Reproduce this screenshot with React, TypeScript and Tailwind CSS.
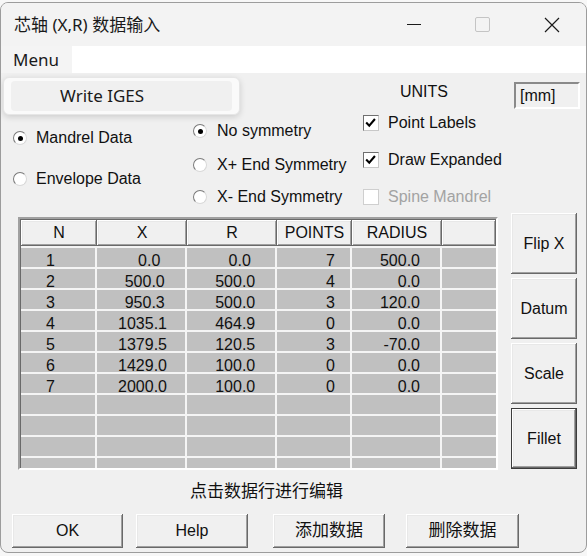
import React from 'react';

const raised =
  'bg-[#f0f0f0] shadow-[inset_-1px_-1px_0_#696969,inset_1px_1px_0_#ffffff,inset_-2px_-2px_0_#a0a0a0,inset_2px_2px_0_#e8e8e8]';

const dlgFont = "font-['Liberation_Sans','Noto_Sans_CJK_SC',sans-serif]";
const uiFont = "font-['Noto_Sans','Noto_Sans_CJK_SC',sans-serif]";

const rows = [
  ['1', '0.0', '0.0', '7', '500.0'],
  ['2', '500.0', '500.0', '4', '0.0'],
  ['3', '950.3', '500.0', '3', '120.0'],
  ['4', '1035.1', '464.9', '0', '0.0'],
  ['5', '1379.5', '120.5', '3', '-70.0'],
  ['6', '1429.0', '100.0', '0', '0.0'],
  ['7', '2000.0', '100.0', '0', '0.0'],
];

const gridCols = 'grid grid-cols-[76px_90px_90px_75px_90px_1fr]';

const Radio = ({ checked = false }: { checked?: boolean }) => (
  <span className="w-[14px] h-[14px] rounded-full bg-white border border-t-[#7a7a7a] border-l-[#7a7a7a] border-b-[#d8d8d8] border-r-[#d8d8d8] flex items-center justify-center shrink-0">
    {checked && <span className="w-[5px] h-[5px] rounded-full bg-black" />}
  </span>
);

const Check = ({ checked = false, disabled = false }: { checked?: boolean; disabled?: boolean }) => (
  <span
    className={`w-[16px] h-[16px] bg-white border flex items-center justify-center shrink-0 ${
      disabled ? 'border-[#cfcfcf]' : 'border-t-[#6f6f6f] border-l-[#6f6f6f] border-b-[#c8c8c8] border-r-[#c8c8c8]'
    }`}
  >
    {checked && (
      <svg viewBox="0 0 16 16" className="w-[14px] h-[14px]" fill="none" stroke="#000" strokeWidth="2.4">
        <path d="M2.5 7.5 L6 11 L12.5 3.5" />
      </svg>
    )}
  </span>
);

const App = () => {
  return (
    <div className={`w-[587px] h-[556px] bg-[#f7f7f7] pt-[2px] ${dlgFont}`}>
      <div className="w-[587px] h-[551px] rounded-[8px] border border-[#9c9c9c] overflow-hidden flex flex-col bg-[#f0f0f0]">
        {/* title bar */}
        <div className="h-[43px] bg-[#f3f3f3] flex items-center shrink-0">
          <span className={`flex-1 pl-[13px] text-[17px] text-[#1a1a1a] ${uiFont}`}>芯轴 (X,R) 数据输入</span>
          <div className="w-[69px] h-full flex items-center justify-center">
            <span className="w-[14px] h-px bg-[#1a1a1a]" />
          </div>
          <div className="w-[69px] h-full flex items-center justify-center">
            <span className="w-[15px] h-[15px] border border-[#c4c4c4] rounded-[2px]" />
          </div>
          <div className="w-[69px] h-full flex items-center justify-center">
            <svg viewBox="0 0 16 16" className="w-[16px] h-[16px]" fill="none" stroke="#1a1a1a" strokeWidth="1.2">
              <path d="M1 1 L15 15 M15 1 L1 15" />
            </svg>
          </div>
        </div>

        {/* menu bar */}
        <div className="h-[27px] bg-white flex shrink-0">
          <div className={`w-[71px] h-full bg-[#f4f4f4] pl-[12px] flex items-center text-[17px] text-[#1a1a1a] ${uiFont}`}>
            Menu
          </div>
        </div>

        {/* body */}
        <div className="relative flex-1 flex flex-col text-[16px] text-[#111]">
          <div className="absolute top-[4px] left-[2px] w-[237px] h-[38px] rounded-[6px] bg-[#fafafa] border border-[#e6e6e6] shadow-[0_2px_6px_rgba(0,0,0,0.15)] p-[3px_7px]">
            <div className={`h-full rounded-[4px] bg-[#f0f0f0] pl-[49px] flex items-center text-[17px] text-[#1a1a1a] ${uiFont}`}>
              Write IGES
            </div>
          </div>

          {/* options */}
          <div className="h-[140px] flex shrink-0">
            <div className="w-[192px] pl-[12px] pt-[55px] flex flex-col gap-[21px]">
              <div className="h-[20px] flex items-center gap-[9px]">
                <Radio checked />
                <span>Mandrel Data</span>
              </div>
              <div className="h-[20px] flex items-center gap-[9px]">
                <Radio />
                <span>Envelope Data</span>
              </div>
            </div>
            <div className="w-[170px] pt-[48px] flex flex-col">
              <div className="h-[20px] flex items-center gap-[10px]">
                <Radio checked />
                <span>No symmetry</span>
              </div>
              <div className="h-[20px] mt-[14px] flex items-center gap-[10px]">
                <Radio />
                <span>X+ End Symmetry</span>
              </div>
              <div className="h-[20px] mt-[12px] flex items-center gap-[10px]">
                <Radio />
                <span>X- End Symmetry</span>
              </div>
            </div>
            <div className="w-[151px] pt-[9px] flex flex-col">
              <div className="h-[20px] pl-[37px] flex items-center">UNITS</div>
              <div className="h-[20px] mt-[11px] flex items-center gap-[9px]">
                <Check checked />
                <span>Point Labels</span>
              </div>
              <div className="h-[20px] mt-[17px] flex items-center gap-[9px]">
                <Check checked />
                <span>Draw Expanded</span>
              </div>
              <div className="h-[20px] mt-[17px] flex items-center gap-[9px]">
                <Check disabled />
                <span className="text-[#a3a3a3]">Spine Mandrel</span>
              </div>
            </div>
            <div className="pt-[9px]">
              <div className="w-[66px] h-[27px] border-2 border-t-[#8a8a8a] border-l-[#8a8a8a] border-b-[#ffffff] border-r-[#ffffff] pl-[4px] flex items-center">
                [mm]
              </div>
            </div>
          </div>

          {/* table + side buttons */}
          <div className="h-[257px] flex shrink-0">
            <div className="ml-[17px] mt-[4px] w-[480px] h-[253px] border-2 border-t-[#a0a0a0] border-l-[#a0a0a0] border-b-white border-r-white">
              <div className="h-full border-t border-l border-[#696969] bg-[#f4f4f4] overflow-hidden">
                <div className={`${gridCols} h-[26px]`}>
                  {['N', 'X', 'R', 'POINTS', 'RADIUS', ''].map((h, i) => (
                    <div key={i} className={`${raised} flex items-center justify-center`}>
                      {h}
                    </div>
                  ))}
                </div>
                {Array.from({ length: 11 }).map((_, r) => {
                  const row = rows[r];
                  return (
                    <div key={r} className={`${gridCols} h-[21px] border-t-2 border-[#f4f4f4]`}>
                      <div className="bg-[#c0c0c0] border-r-2 border-[#f4f4f4] pl-[25px] pt-[6px] leading-[13px]">
                        {row?.[0]}
                      </div>
                      <div className="bg-[#c0c0c0] border-r-2 border-[#f4f4f4] pl-[3px] pt-[6px] leading-[13px] text-center whitespace-pre">
                        {row ? row[1].padStart(6, ' ') : ''}
                      </div>
                      <div className="bg-[#c0c0c0] border-r-2 border-[#f4f4f4] pl-[4px] pt-[6px] leading-[13px] text-center whitespace-pre">
                        {row ? row[2].padStart(6, ' ') : ''}
                      </div>
                      <div className="bg-[#c0c0c0] border-r-2 border-[#f4f4f4] pr-[15px] pt-[6px] leading-[13px] text-right">
                        {row?.[3]}
                      </div>
                      <div className="bg-[#c0c0c0] border-r-2 border-[#f4f4f4] pr-[20px] pt-[6px] leading-[13px] text-right">
                        {row?.[4]}
                      </div>
                      <div className="bg-[#c0c0c0]" />
                    </div>
                  );
                })}
              </div>
            </div>
            <div className="ml-[13px] w-[66px] flex flex-col gap-[4px]">
              {['Flip X', 'Datum', 'Scale'].map((b) => (
                <div key={b} className={`${raised} h-[61px] flex items-center justify-center`}>
                  {b}
                </div>
              ))}
              <div className="h-[61px] border border-[#3c3c3c]">
                <div className={`${raised} h-full flex items-center justify-center`}>Fillet</div>
              </div>
            </div>
          </div>

          <div className="mt-[10px] h-[20px] pl-[189px] flex items-center text-[17px] font-['Noto_Sans_CJK_SC',sans-serif]">
            点击数据行进行编辑
          </div>

          <div className="mt-[14px] h-[34px] flex">
            <div className={`${raised} ml-[11px] w-[111px] flex items-center justify-center`}>OK</div>
            <div className={`${raised} ml-[13px] w-[112px] flex items-center justify-center`}>Help</div>
            <div className={`${raised} ml-[25px] w-[112px] flex items-center justify-center text-[17px]`}>添加数据</div>
            <div className={`${raised} ml-[21px] w-[113px] flex items-center justify-center text-[17px]`}>删除数据</div>
          </div>
        </div>
      </div>
    </div>
  );
};

export default App;
